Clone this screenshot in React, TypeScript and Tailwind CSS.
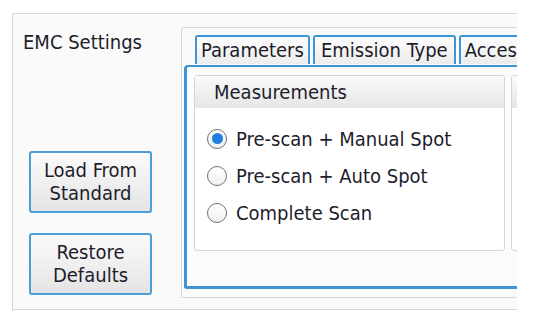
import React from 'react';

const font = { fontFamily: '"DejaVu Sans Condensed", "DejaVu Sans", sans-serif' };

const Radio: React.FC<{ checked?: boolean; label: string }> = ({ checked, label }) => (
  <div className="flex items-center h-[37px]">
    <span className="w-[20px] h-[20px] rounded-full border-[1.5px] border-[#707070] bg-gradient-to-b from-white to-[#f0f0f0] flex items-center justify-center">
      {checked && <span className="w-[11px] h-[11px] rounded-full bg-[#1e7fe0]" />}
    </span>
    <span className="ml-[9px] text-[20px] text-[#1d1d2b] leading-none">{label}</span>
  </div>
);

const SideButton: React.FC<{ lines: string[] }> = ({ lines }) => (
  <button className="w-[123px] h-[62px] rounded-[3px] border-2 border-[#4b9fd8] bg-gradient-to-b from-[#fbfbfb] to-[#e4e4e4] flex flex-col items-center justify-center text-[20px] leading-[23px] text-[#1d1d2b]">
    {lines.map(l => (
      <span key={l}>{l}</span>
    ))}
  </button>
);

export default function App() {
  return (
    <div className="w-[535px] h-[319px] bg-white pt-[13px] pl-[12px]" style={font}>
      {/* Outer panel */}
      <div className="w-[505px] h-[297px] border-l border-t border-b border-[#d6d6d6] bg-[#fafafa] flex overflow-hidden">
        {/* Left column */}
        <div className="w-[168px] shrink-0 flex flex-col pl-[10px]">
          <div className="mt-[18px] text-[20px] leading-none text-[#1d1d2b]">EMC Settings</div>
          <div className="mt-[99px] ml-[6px]">
            <SideButton lines={['Load From', 'Standard']} />
          </div>
          <div className="mt-[20px] ml-[6px]">
            <SideButton lines={['Restore', 'Defaults']} />
          </div>
        </div>

        {/* Group box with tabs */}
        <div className="mt-[13px] h-[271px] w-[400px] shrink-0 border-l border-t border-b border-[#d9d9d9] rounded-tl-[3px] flex flex-col pl-[2px] pb-[8px]">
          <div className="flex gap-[3px] pl-[11px] pt-[7px] h-[37px]">
            <div className="h-[29px] px-[4px] border-2 border-b-0 border-[#3d95d6] rounded-t-[3px] bg-gradient-to-b from-[#fdfdfd] to-[#ececec] text-[20px] leading-[27px] text-[#1d1d2b]">
              Parameters
            </div>
            <div className="h-[29px] px-[6px] border-2 border-b-0 border-[#3d95d6] rounded-t-[3px] bg-gradient-to-b from-[#fdfdfd] to-[#ececec] text-[20px] leading-[27px] text-[#1d1d2b] whitespace-nowrap">
              Emission Type
            </div>
            <div className="h-[29px] px-[4px] border-2 border-b-0 border-[#3d95d6] rounded-t-[3px] bg-gradient-to-b from-[#fdfdfd] to-[#ececec] text-[20px] leading-[27px] text-[#1d1d2b] whitespace-nowrap">
              Accessories
            </div>
          </div>
          {/* Tab content */}
          <div className="flex-1 border-l-[3px] border-t-2 border-b-[3px] border-[#3d95d6] rounded-tl-[4px] rounded-bl-[3px] bg-[#fbfbfb] flex gap-[6px] pl-[7px] pt-[8px]">
            <div className="w-[311px] h-[176px] shrink-0 border border-[#d6d6d6] rounded-[3px] bg-white flex flex-col">
              <div className="h-[32px] bg-gradient-to-b from-[#fafafa] to-[#e6e6e6] pl-[19px] flex items-center text-[20px] text-[#1d1d2b]">
                Measurements
              </div>
              <div className="pl-[12px] pt-[12px] flex flex-col">
                <Radio checked label="Pre-scan + Manual Spot" />
                <Radio label="Pre-scan + Auto Spot" />
                <Radio label="Complete Scan" />
              </div>
            </div>
            <div className="w-[100px] h-[176px] shrink-0 border border-[#d6d6d6] rounded-[3px] bg-white">
              <div className="h-[32px] bg-gradient-to-b from-[#fafafa] to-[#e6e6e6]" />
            </div>
          </div>
        </div>
      </div>
    </div>
  );
}
